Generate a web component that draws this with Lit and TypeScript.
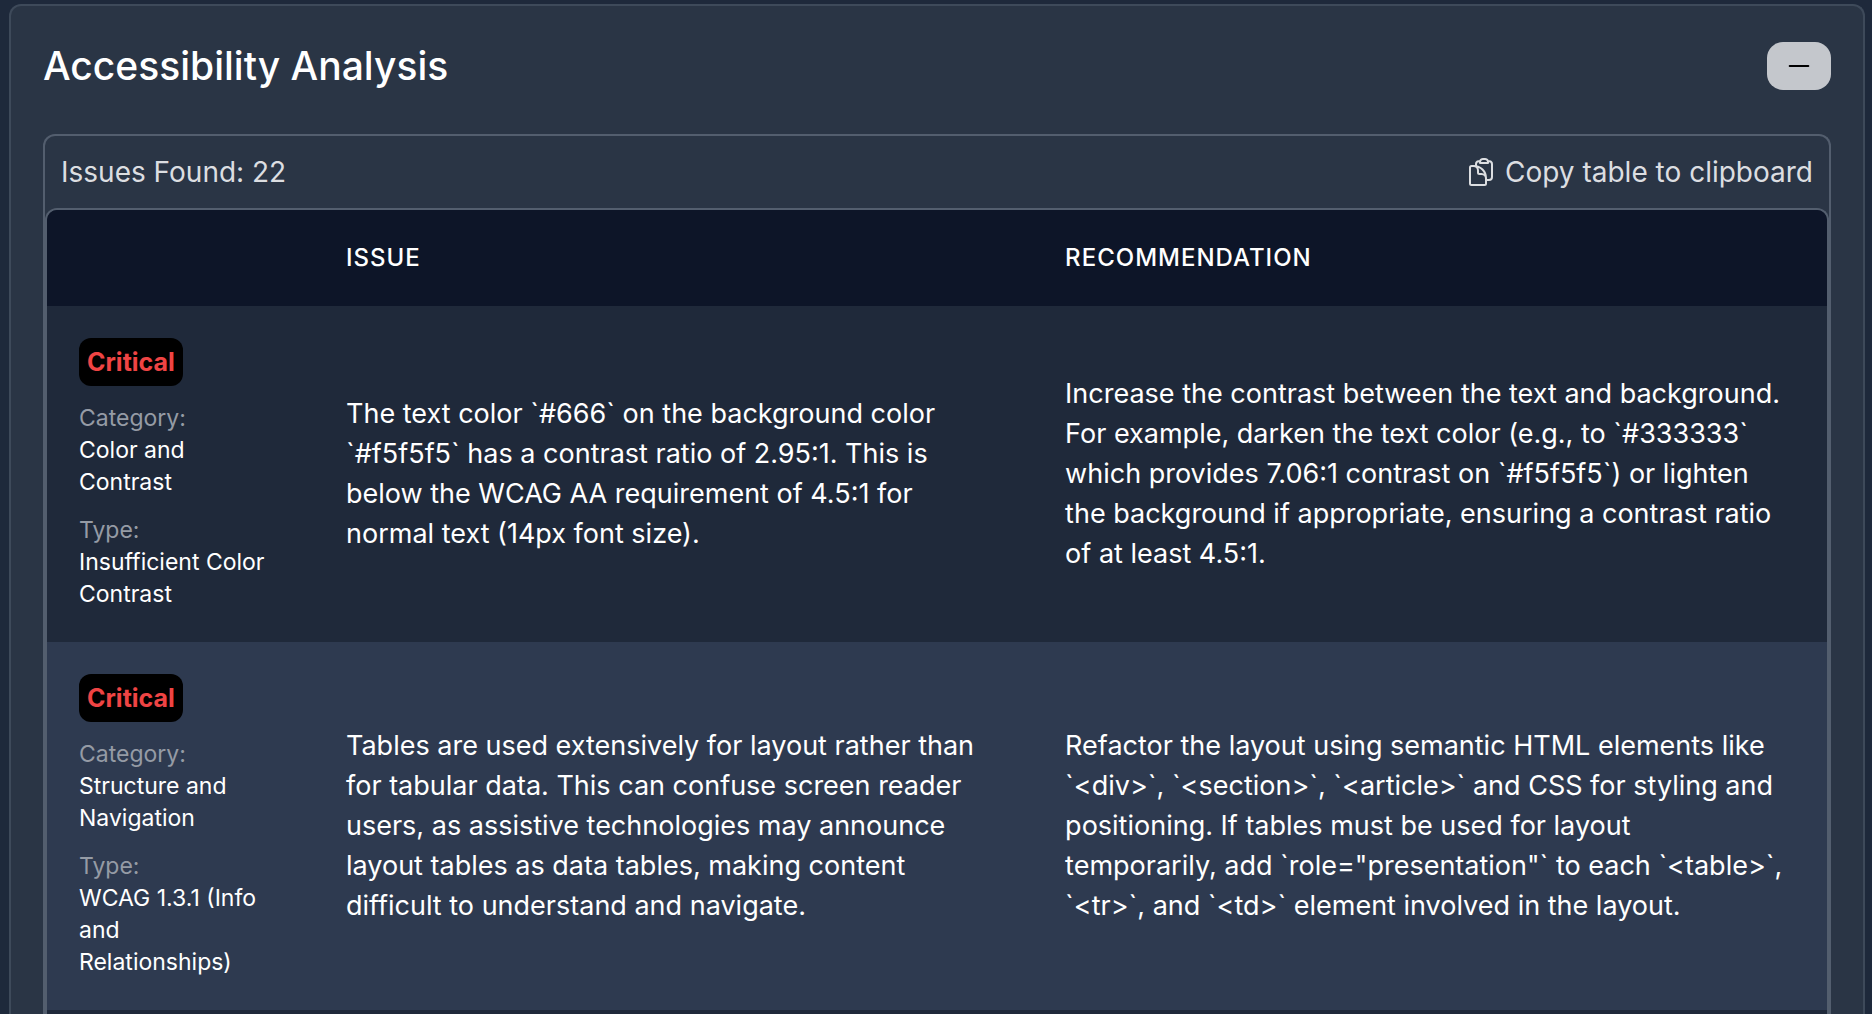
import { LitElement, html, css } from "lit";
import { customElement, property, state } from "lit/decorators.js";

interface Issue {
  severity: string;
  category: string;
  type: string;
  issue: string;
  recommendation: string;
}

const ISSUES: Issue[] = [
  {
    severity: "Critical",
    category: "Color and Contrast",
    type: "Insufficient Color Contrast",
    issue:
      "The text color `#666` on the background color `#f5f5f5` has a contrast ratio of 2.95:1. This is below the WCAG AA requirement of 4.5:1 for normal text (14px font size).",
    recommendation:
      "Increase the contrast between the text and background. For example, darken the text color (e.g., to `#333333` which provides 7.06:1 contrast on `#f5f5f5`) or lighten the background if appropriate, ensuring a contrast ratio of at least 4.5:1.",
  },
  {
    severity: "Critical",
    category: "Structure and Navigation",
    type: "WCAG 1.3.1 (Info and\nRelationships)",
    issue:
      "Tables are used extensively for layout rather than for tabular data. This can confuse screen reader users, as assistive technologies may announce layout tables as data tables, making content difficult to understand and navigate.",
    recommendation:
      'Refactor the layout using semantic HTML elements like `<div>`, `<section>`, `<article>` and CSS for styling and positioning. If tables must be used for layout\ntemporarily, add `role="presentation"` to each `<table>`, `<tr>`, and `<td>` element involved in the layout.',
  },
];

@customElement("issue-table")
export class IssueTable extends LitElement {
  @property({ attribute: false }) issues: Issue[] = [];

  static styles = css`
    :host {
      display: block;
      flex: 1;
      border: 2px solid #535e6e;
      border-bottom: 0;
      border-radius: 12px 12px 0 0;
      background: #1f293a;
      overflow: hidden;
    }
    .table {
      width: 100%;
      table-layout: fixed;
      border-collapse: collapse;
      color: #fff;
      font-size: 27px;
      line-height: 40px;
    }
    .col-meta {
      width: 15%;
    }
    .col-issue {
      width: 40.4%;
    }
    .head {
      background: #0d1528;
    }
    .head-cell {
      padding: 32px;
      text-align: left;
      text-transform: uppercase;
      font-size: 24px;
      line-height: 32px;
      font-weight: 500;
      letter-spacing: 1px;
    }
    .row:nth-child(even) {
      background: #2e3a50;
    }
    .cell {
      padding: 32px;
      vertical-align: middle;
    }
    .text {
      white-space: pre-line;
    }
    .meta {
      display: flex;
      flex-direction: column;
      align-items: flex-start;
      gap: 16px;
      font-size: 23px;
      line-height: 32px;
    }
    .badge {
      padding: 8px;
      border-radius: 12px;
      background: #000;
      color: #ef4444;
      font-size: 25px;
      font-weight: 700;
    }
    .label {
      color: #959ba5;
    }
  `;

  render() {
    return html`
      <table class="table">
        <colgroup>
          <col class="col-meta" />
          <col class="col-issue" />
          <col />
        </colgroup>
        <thead class="head">
          <tr>
            <td class="head-cell"></td>
            <th class="head-cell" scope="col">Issue</th>
            <th class="head-cell" scope="col">Recommendation</th>
          </tr>
        </thead>
        <tbody>
          ${this.issues.map(
            (i) => html`
              <tr class="row">
                <td class="cell">
                  <div class="meta">
                    <span class="badge">${i.severity}</span>
                    <div>
                      <div class="label">Category:</div>
                      <div class="text">${i.category}</div>
                    </div>
                    <div>
                      <div class="label">Type:</div>
                      <div class="text">${i.type}</div>
                    </div>
                  </div>
                </td>
                <td class="cell text">${i.issue}</td>
                <td class="cell text">${i.recommendation}</td>
              </tr>
            `
          )}
        </tbody>
      </table>
    `;
  }
}

@customElement("app-root")
export class AppRoot extends LitElement {
  @state() private open = true;

  static styles = css`
    :host {
      display: flex;
      box-sizing: border-box;
      height: 100vh;
      overflow: hidden;
      padding: 4px 7px 0 9px;
      background: #1e293b;
      font-family: Inter, "Liberation Sans", sans-serif;
    }
    .card {
      flex: 1;
      min-width: 0;
      display: flex;
      flex-direction: column;
      gap: 44px;
      padding: 36px 32px 0;
      border: 2px solid #3e4a5a;
      border-bottom: 0;
      border-radius: 12px 12px 0 0;
      background: #2a3545;
    }
    .card-head,
    .toolbar {
      display: flex;
      align-items: center;
      justify-content: space-between;
    }
    .title {
      margin: 0;
      color: #fff;
      font-size: 39px;
      line-height: 48px;
      font-weight: 500;
    }
    .toggle {
      display: flex;
      padding: 8px 16px;
      border: 0;
      border-radius: 16px;
      background: #c4c7cc;
      color: #000;
      cursor: pointer;
    }
    .icon {
      display: block;
      width: 32px;
      height: 32px;
      fill: none;
      stroke: currentColor;
      stroke-width: 1.5;
      stroke-linecap: round;
      stroke-linejoin: round;
    }
    .panel {
      flex: 1;
      display: flex;
      flex-direction: column;
      border: 2px solid #535e6e;
      border-bottom: 0;
      border-radius: 12px 12px 0 0;
    }
    .toolbar {
      padding: 16px;
      color: #dcdee1;
      font-size: 28px;
      line-height: 40px;
    }
    .copy {
      display: flex;
      align-items: center;
      gap: 8px;
      padding: 0;
      border: 0;
      background: none;
      color: inherit;
      font: inherit;
      cursor: pointer;
    }
  `;

  private toggle() {
    this.open = !this.open;
  }

  private copy() {
    const lines = ISSUES.map((i) =>
      [i.severity, i.category, i.type, i.issue, i.recommendation].join("\t")
    );
    navigator.clipboard?.writeText(lines.join("\n"));
  }

  render() {
    return html`
      <section class="card">
        <header class="card-head">
          <h2 class="title">Accessibility Analysis</h2>
          <button
            class="toggle"
            aria-label="Toggle section"
            aria-expanded=${this.open ? "true" : "false"}
            @click=${this.toggle}
          >
            <svg class="icon" viewBox="0 0 24 24" aria-hidden="true">
              <path d=${this.open ? "M5 12h14" : "M12 5v14M5 12h14"} />
            </svg>
          </button>
        </header>
        ${this.open
          ? html`
              <div class="panel">
                <div class="toolbar">
                  <span>Issues Found: 22</span>
                  <button class="copy" @click=${this.copy}>
                    <svg class="icon" viewBox="0 0 24 24" aria-hidden="true">
                      <path
                        d="M8.25 7.5V6.108c0-1.135.845-2.098 1.976-2.192.373-.03.748-.057 1.123-.08M15.75 18H18a2.25 2.25 0 0 0 2.25-2.25V6.108c0-1.135-.845-2.098-1.976-2.192a48.424 48.424 0 0 0-1.123-.08M15.75 18.75v-1.875a3.375 3.375 0 0 0-3.375-3.375h-1.5a1.125 1.125 0 0 1-1.125-1.125v-1.5A3.375 3.375 0 0 0 6.375 7.5H5.25m11.9-3.664A2.251 2.251 0 0 0 15 2.25h-1.5a2.251 2.251 0 0 0-2.15 1.586m5.8 0c.065.21.1.433.1.664v.75h-6V4.5c0-.231.035-.454.1-.664M6.75 7.5H4.875c-.621 0-1.125.504-1.125 1.125v12c0 .621.504 1.125 1.125 1.125h9.75c.621 0 1.125-.504 1.125-1.125V16.5a9 9 0 0 0-9-9Z"
                      />
                    </svg>
                    Copy table to clipboard
                  </button>
                </div>
                <issue-table .issues=${ISSUES}></issue-table>
              </div>
            `
          : null}
      </section>
    `;
  }
}
